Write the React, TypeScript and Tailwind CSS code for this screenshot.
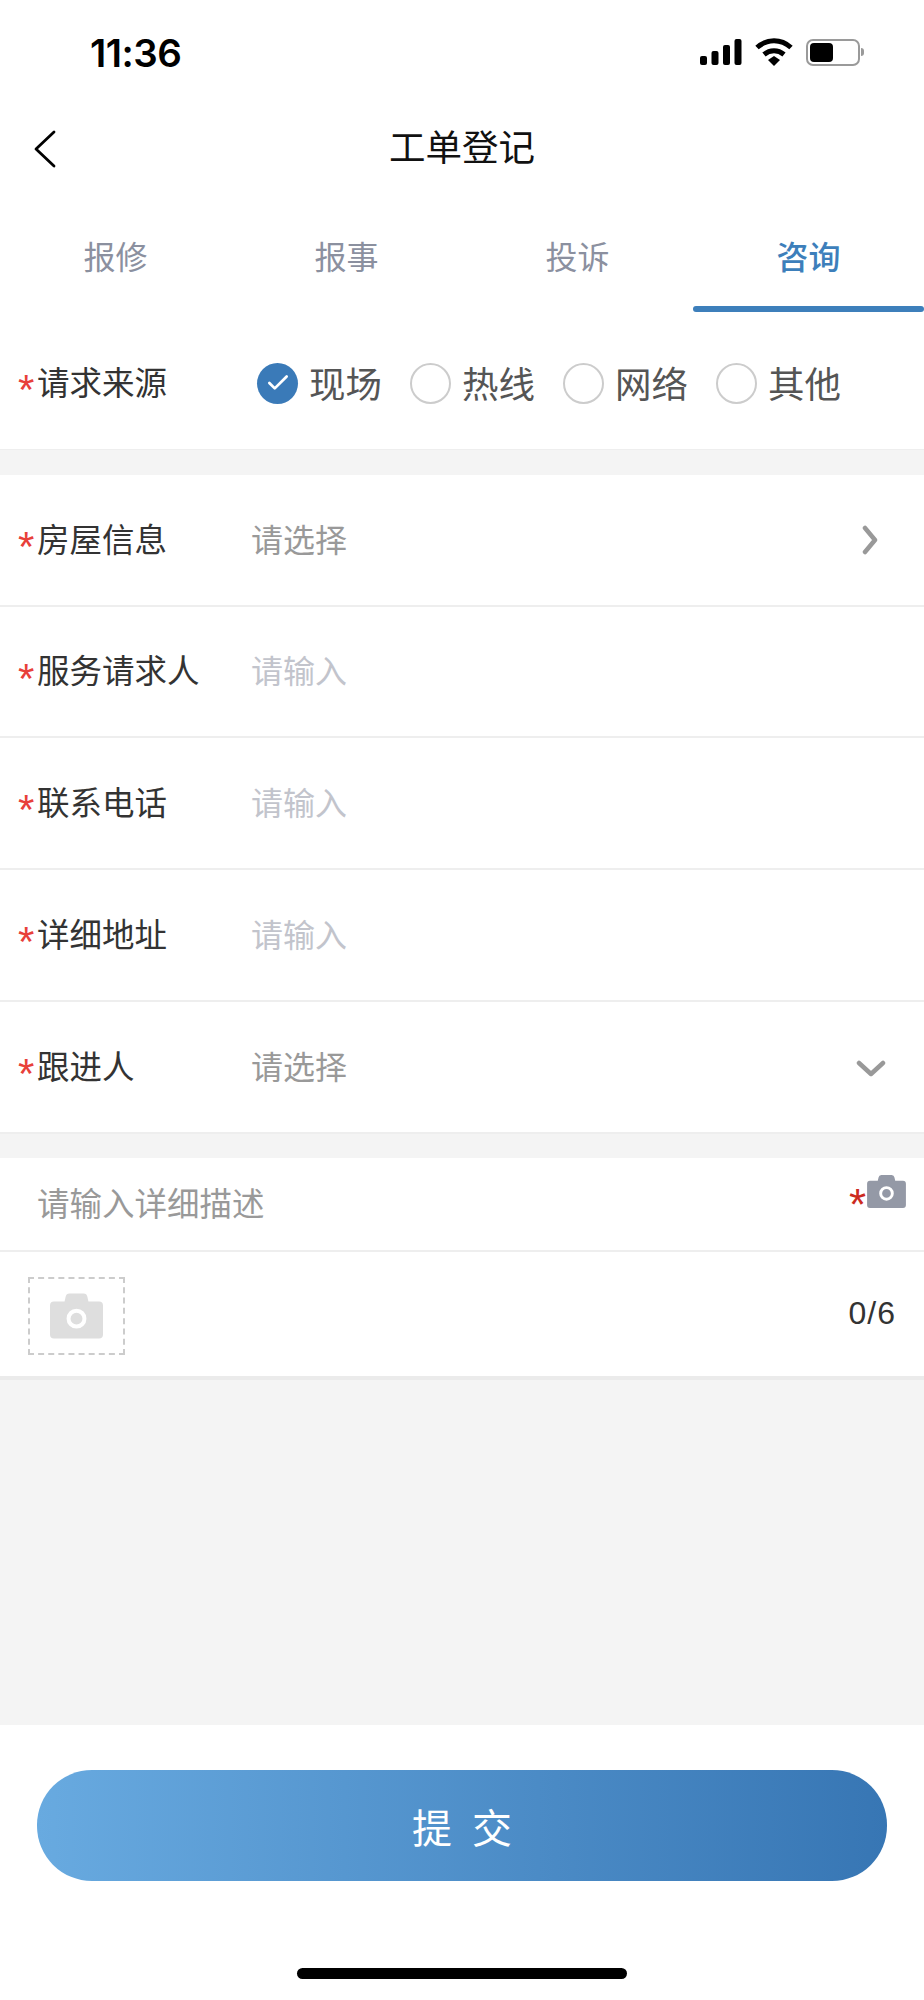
import { Check } from "lucide-react";

const cjk = "font-['Noto_Sans_CJK_SC','Liberation_Sans',sans-serif]";

function CameraIcon({ className }: { className: string }) {
  return (
    <svg viewBox="0 0 40 34" className={className} fill="currentColor">
      <path d="M3 6h8l.800-3.500A3 3 0 0 1 14.700 0h10.600a3 3 0 0 1 2.900 2.500L29 6h8a3 3 0 0 1 3 3v22a3 3 0 0 1-3 3H3a3 3 0 0 1-3-3V9a3 3 0 0 1 3-3z" />
      <circle cx="20" cy="19" r="6" fill="none" stroke="#fff" strokeWidth="3" />
    </svg>
  );
}

function StatusBar() {
  return (
    <div className="h-[104px] pl-[90px] pr-[60px] flex items-start justify-between pt-[33px]">
      <span className="text-[38.500px] leading-[40px] font-semibold text-black font-['Inter',sans-serif] tracking-[-0.5px]">
        11:36
      </span>
      <div className="flex items-center gap-[13px] mt-[5px]">
        <svg viewBox="0 0 42 26" className="w-[42px] h-[26px]" fill="#000">
          <rect x="0" y="17" width="7" height="9" rx="2" />
          <rect x="11.500" y="12" width="7" height="14" rx="2" />
          <rect x="23" y="6" width="7" height="20" rx="2" />
          <rect x="34.500" y="0" width="7" height="26" rx="2" />
        </svg>
        <svg viewBox="0 0 38 28" className="w-[38px] h-[28px]" fill="none" stroke="#000" strokeWidth="5">
          <path d="M2 9.500c10-9 24-9 34 0" />
          <path d="M9 16.500c6-5 14-5 20 0" />
          <path d="M13 22l6-4 6 4-6 6z" fill="#000" stroke="none" />
        </svg>
        <div className="flex items-center gap-[1px]">
          <div className="w-[54px] h-[27px] rounded-[7px] border-2 border-[#9a9a9a] p-[2px]">
            <div className="w-[23px] h-full rounded-[4px] bg-black" />
          </div>
          <div className="w-[3px] h-[8px] rounded-r-full bg-[#9a9a9a]" />
        </div>
      </div>
    </div>
  );
}

function Tabs() {
  const tabs = ["报修", "报事", "投诉", "咨询"];
  return (
    <div className="h-[119px] flex">
      {tabs.map((t) => (
        <div key={t} className="flex-1 relative flex justify-center pt-[38px]">
          <span
            className={`text-[32px] leading-[48px] ${
              t === "咨询" ? "text-[#3d7fbb] font-medium" : "text-[#8b909f]"
            }`}
          >
            {t}
          </span>
          {t === "咨询" && (
            <div className="absolute bottom-0 left-0 w-full h-[6px] rounded-full bg-[#3d7fbb]" />
          )}
        </div>
      ))}
    </div>
  );
}

function Radio({ label, checked }: { label: string; checked?: boolean }) {
  return (
    <div className="flex items-center gap-[11px]">
      {checked ? (
        <div className="w-[41px] h-[41px] rounded-full bg-[#3a7ab8] flex items-center justify-center">
          <Check size={26} color="#fff" strokeWidth={2.5} />
        </div>
      ) : (
        <div className="w-[41px] h-[41px] rounded-full border-2 border-[#cccccc]" />
      )}
      <span className="text-[36.500px] leading-[52px] text-[#555555]">{label}</span>
    </div>
  );
}

function Label({ text }: { text: string }) {
  return (
    <div className="w-[252px] pl-[18px] flex items-center shrink-0">
      <span className="text-[#e8403a] text-[42px] leading-[46px] w-[19px] mt-[14px] font-['Liberation_Sans',sans-serif]">
        *
      </span>
      <span className="text-[32.500px] leading-[46px] text-[#333333] mb-[5px]">{text}</span>
    </div>
  );
}

function FormRow({
  label,
  placeholder,
  dark,
  right,
  height,
}: {
  label: string;
  placeholder: string;
  dark?: boolean;
  right?: React.ReactNode;
  height: string;
}) {
  return (
    <div className={`${height} flex items-center border-b-2 border-[#eeeeee] pr-[38px]`}>
      <Label text={label} />
      <span
        className={`flex-1 text-[32px] leading-[46px] mb-[5px] ml-[-1px] ${
          dark ? "text-[#999999]" : "text-[#c2c4cc]"
        }`}
      >
        {placeholder}
      </span>
      {right}
    </div>
  );
}

export default function App() {
  return (
    <div className={`w-[924px] h-[2000px] bg-white flex flex-col overflow-hidden ${cjk}`}>
      <StatusBar />
      <div className="h-[89px] relative flex items-center justify-center">
        <svg
          viewBox="0 0 24 38"
          className="absolute left-[33px] top-[26px] w-[24px] h-[38px]"
          fill="none"
          stroke="#000"
          strokeWidth="2.800"
          strokeLinecap="round"
          strokeLinejoin="round"
        >
          <path d="M21 2 3 19l18 17" />
        </svg>
        <span className="text-[36.500px] leading-[52px] text-[#111111] mt-[-5px]">工单登记</span>
      </div>
      <Tabs />
      <div className="h-[138px] flex items-center border-b border-[#eeeeee] pt-[5px]">
        <Label text="请求来源" />
        <div className="flex gap-[28px] ml-[5px]">
          <Radio label="现场" checked />
          <Radio label="热线" />
          <Radio label="网络" />
          <Radio label="其他" />
        </div>
      </div>
      <div className="h-[25px] bg-[#f4f4f4]" />
      <FormRow
        height="h-[132px]"
        label="房屋信息"
        placeholder="请选择"
        dark
        right={
          <svg viewBox="0 0 16 30" className="w-[16px] h-[30px] mr-[8px]" fill="none" stroke="#999999" strokeWidth="4.500" strokeLinecap="round" strokeLinejoin="round">
            <path d="M3 3 13 15 3 27" />
          </svg>
        }
      />
      <FormRow height="h-[131px]" label="服务请求人" placeholder="请输入" />
      <FormRow height="h-[132px]" label="联系电话" placeholder="请输入" />
      <FormRow height="h-[132px]" label="详细地址" placeholder="请输入" />
      <FormRow
        height="h-[132px]"
        label="跟进人"
        placeholder="请选择"
        dark
        right={
          <svg viewBox="0 0 30 18" className="w-[30px] h-[18px] mt-[4px]" fill="none" stroke="#999999" strokeWidth="4.500" strokeLinecap="round" strokeLinejoin="round">
            <path d="M3 3 15 14 27 3" />
          </svg>
        }
      />
      <div className="h-[24px] bg-[#f4f4f4]" />
      <div className="h-[94px] flex pl-[37px] pr-[18px] border-b-2 border-[#eeeeee] justify-between">
        <span className="text-[32.500px] leading-[46px] text-[#999999] mt-[21px]">请输入详细描述</span>
        <div className="flex items-start mt-[17px]">
          <span className="text-[#cc2a20] text-[44px] leading-[40px] mt-[10px] mr-[1px] font-['Liberation_Sans',sans-serif]">
            *
          </span>
          <CameraIcon className="w-[39px] h-[33px] text-[#9499a6]" />
        </div>
      </div>
      <div className="h-[128px] flex items-start justify-between pl-[28px] pr-[28px] border-b-4 border-[#ebebeb]">
        <div className="w-[97px] h-[78px] mt-[25px] border-2 border-dashed border-[#cccccc] flex items-center justify-center">
          <CameraIcon className="w-[53px] h-[46px] text-[#dedede]" />
        </div>
        <span className="text-[32px] leading-[40px] tracking-[1px] text-[#333333] mt-[41px] font-['Liberation_Sans',sans-serif]">
          0/6
        </span>
      </div>
      <div className="h-[345px] bg-[#f4f4f4]" />
      <div className="flex-1 px-[37px] pt-[45px] flex flex-col items-center">
        <button className="w-full h-[111px] rounded-[55px] bg-gradient-to-r from-[#68aae0] to-[#3776b4] text-white text-[40px] tracking-[20px] pl-[20px] flex items-center justify-center">
          提交
        </button>
        <div className="w-[330px] h-[11px] rounded-full bg-black mt-[87px]" />
      </div>
    </div>
  );
}
